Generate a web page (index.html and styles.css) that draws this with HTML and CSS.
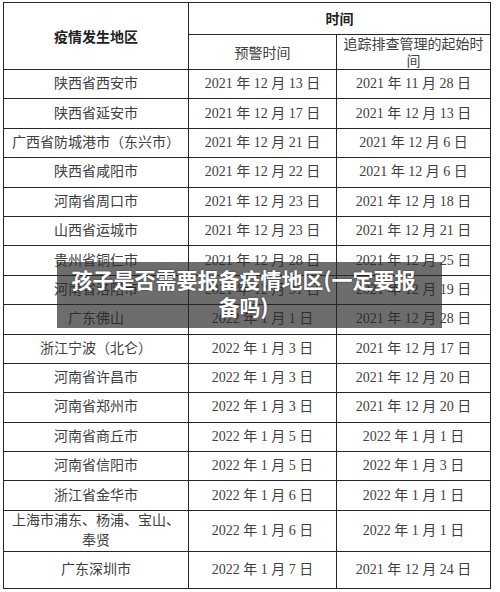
FILE: index.html
```html
<!DOCTYPE html>
<html lang="zh-CN">
<head>
<meta charset="utf-8">
<title>疫情地区</title>
<link rel="stylesheet" href="styles.css">
</head>
<body>
<div class="page">
  <table class="sheet">
    <colgroup>
      <col class="c1"><col class="c2"><col class="c3">
    </colgroup>
    <thead>
      <tr class="h1">
        <th rowspan="2" class="area">疫情发生地区</th>
        <th colspan="2">时间</th>
      </tr>
      <tr class="h2">
        <th class="sub">预警时间</th>
        <th class="sub">追踪排查管理的起始时间</th>
      </tr>
    </thead>
    <tbody>
      <tr><td>陕西省西安市</td><td>2021 年 12 月 13 日</td><td>2021 年 11 月 28 日</td></tr>
      <tr><td>陕西省延安市</td><td>2021 年 12 月 17 日</td><td>2021 年 12 月 13 日</td></tr>
      <tr><td>广西省防城港市（东兴市）</td><td>2021 年 12 月 21 日</td><td>2021 年 12 月 6 日</td></tr>
      <tr><td>陕西省咸阳市</td><td>2021 年 12 月 22 日</td><td>2021 年 12 月 6 日</td></tr>
      <tr><td>河南省周口市</td><td>2021 年 12 月 23 日</td><td>2021 年 12 月 18 日</td></tr>
      <tr><td>山西省运城市</td><td>2021 年 12 月 23 日</td><td>2021 年 12 月 21 日</td></tr>
      <tr><td>贵州省铜仁市</td><td>2021 年 12 月 28 日</td><td>2021 年 12 月 25 日</td></tr>
      <tr><td>河南省洛阳市</td><td>2021 年 12 月 31 日</td><td>2021 年 12 月 19 日</td></tr>
      <tr><td>广东佛山</td><td>2022 年 1 月 1 日</td><td>2021 年 12 月 28 日</td></tr>
      <tr><td>浙江宁波（北仑）</td><td>2022 年 1 月 3 日</td><td>2021 年 12 月 17 日</td></tr>
      <tr><td>河南省许昌市</td><td>2022 年 1 月 3 日</td><td>2021 年 12 月 20 日</td></tr>
      <tr><td>河南省郑州市</td><td>2022 年 1 月 3 日</td><td>2021 年 12 月 20 日</td></tr>
      <tr><td>河南省商丘市</td><td>2022 年 1 月 5 日</td><td>2022 年 1 月 1 日</td></tr>
      <tr><td>河南省信阳市</td><td>2022 年 1 月 5 日</td><td>2022 年 1 月 3 日</td></tr>
      <tr><td>浙江省金华市</td><td>2022 年 1 月 6 日</td><td>2022 年 1 月 1 日</td></tr>
      <tr class="tall"><td>上海市浦东、杨浦、宝山、<br>奉贤</td><td>2022 年 1 月 6 日</td><td>2022 年 1 月 1 日</td></tr>
      <tr class="last"><td>广东深圳市</td><td>2022 年 1 月 7 日</td><td>2021 年 12 月 24 日</td></tr>
    </tbody>
  </table>
  <div class="caption">孩子是否需要报备疫情地区(一定要报备吗)</div>
</div>
</body>
</html>
```

FILE: styles.css
```css
html, body {
  margin: 0;
  padding: 0;
  background: #ffffff;
}

.page {
  position: relative;
  width: 500px;
  height: 592px;
  padding: 2px 0 0 3px;
  box-sizing: border-box;
  overflow: hidden;
}

.sheet {
  border-collapse: collapse;
  table-layout: fixed;
  width: 487px;
  font-family: "Liberation Serif", "Noto Sans CJK SC", serif;
  font-size: 14px;
  color: #404040;
}

.c1 { width: 185px; }
.c2 { width: 148px; }
.c3 { width: 154px; }

.sheet th,
.sheet td {
  border: 1px solid #262626;
  padding: 0 2px;
  text-align: center;
  vertical-align: middle;
  white-space: normal;
}

.sheet th {
  font-family: "Noto Sans CJK SC", sans-serif;
  font-weight: bold;
  color: #222;
  line-height: 17px;
}

.sheet th.sub {
  font-weight: normal;
  color: #404040;
}

.h1 { height: 32px; }
.h2 { height: 34px; }

.sheet td {
  height: 28.4px;
  line-height: 20px;
}

.sheet tr.tall td { height: 38px; }
.sheet tr.last td { height: 36px; }

.caption {
  position: absolute;
  left: 57px;
  top: 262px;
  width: 385px;
  height: 66px;
  box-sizing: border-box;
  padding: 4px 22px 0 10px;
  background: rgba(40, 40, 40, 0.68);
  color: #ffffff;
  font-family: "Noto Sans CJK SC", sans-serif;
  font-weight: bold;
  font-size: 21px;
  line-height: 27px;
  text-align: center;
  text-shadow: 0 0 2px rgba(0, 0, 0, 0.5);
}
```
